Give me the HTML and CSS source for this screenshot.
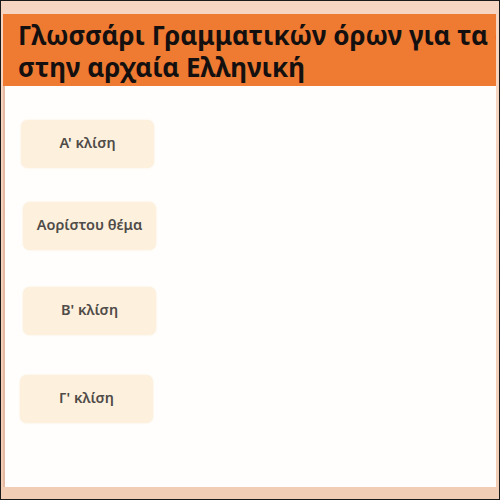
FILE: index.html
```html
<!DOCTYPE html>
<html lang="el">
<head>
<meta charset="utf-8">
<title>Γλωσσάρι</title>
<link rel="stylesheet" href="styles.css">
</head>
<body>
<div class="frame">
  <div class="page">
    <header class="header">
      <h1 class="title"><span class="line">Γλωσσάρι Γραμματικών όρων για τα ουσιαστικά</span><span class="line">στην αρχαία Ελληνική</span></h1>
    </header>
    <main class="list">
      <button class="item item-1">Α' κλίση</button>
      <button class="item item-2">Αορίστου θέμα</button>
      <button class="item item-3">Β' κλίση</button>
      <button class="item item-4">Γ' κλίση</button>
    </main>
  </div>
</div>
</body>
</html>
```
FILE: styles.css
```css
html, body {
  margin: 0;
  padding: 0;
  background: #000;
}
.frame {
  box-sizing: border-box;
  width: 500px;
  height: 500px;
  border: 1px solid #1a1a1a;
  background: linear-gradient(#f6d6c3, #f2cdb6);
  padding: 13px 3px 12px 2px;
  display: flex;
}
.page {
  flex: 1;
  background: #fffefc;
  display: flex;
  flex-direction: column;
  overflow: hidden;
  box-shadow: inset 2px 0 0 #e6b9a3;
}
.header {
  background: #ef7a31;
  height: 72px;
  padding: 5px 0 0 15px;
  box-sizing: border-box;
  overflow: hidden;
}
.title {
  margin: 0;
  font-family: "Noto Sans", "Open Sans", sans-serif;
  font-weight: 700;
  font-size: 26px;
  line-height: 32px;
  color: #141010;
}
.line {
  display: block;
  white-space: nowrap;
}
.list {
  display: flex;
  flex-direction: column;
  align-items: flex-start;
  padding: 34px 0 0 18px;
}
.item {
  width: 133px;
  height: 48px;
  border: none;
  border-radius: 7px;
  background: #fdf0dc;
  color: #4f4b48;
  font-family: "Noto Sans", "Open Sans", sans-serif;
  font-weight: 600;
  font-size: 14.5px;
  padding: 0 0 5px;
  box-shadow: 0 0 2px rgba(240, 220, 190, 0.6);
}
.item-2 { margin: 34px 0 0 2px; }
.item-3 { margin: 37px 0 0 2px; }
.item-4 { margin: 40px 0 0 -1px; }
```
